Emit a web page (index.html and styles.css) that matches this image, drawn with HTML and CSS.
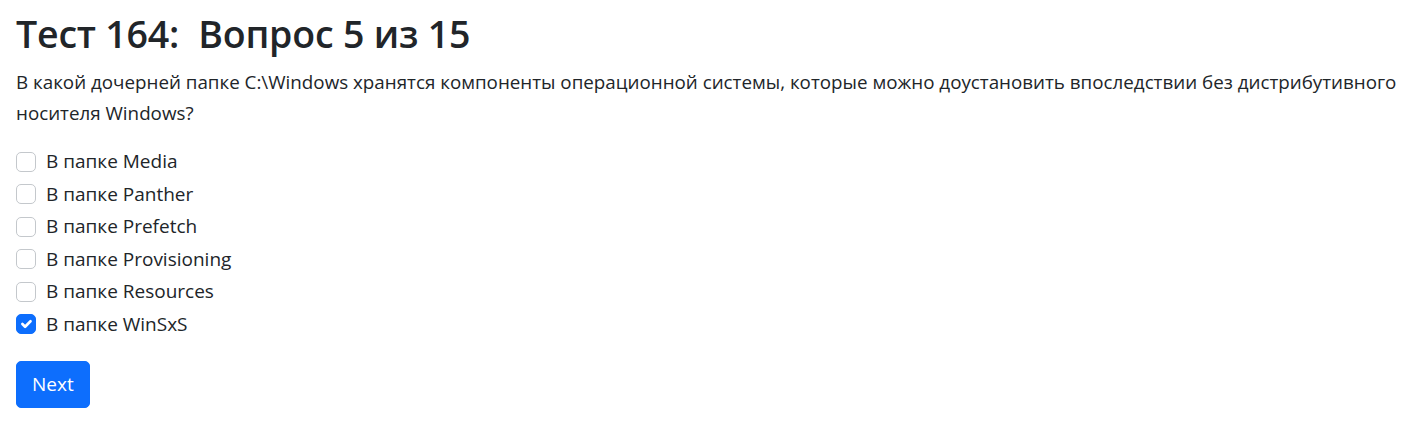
FILE: index.html
```html
<!DOCTYPE html>
<html lang="ru">
<head>
<meta charset="utf-8">
<title>Тест 164</title>
<link rel="stylesheet" href="styles.css">
</head>
<body>
<div class="container">
  <h1 class="title">Тест 164:&nbsp; Вопрос 5 из 15</h1>
  <p class="question">В какой дочерней папке C:\Windows хранятся компоненты операционной системы, которые можно доустановить впоследствии без дистрибутивного носителя Windows?</p>
  <form class="answers">
    <label class="check"><span class="box"></span><span class="label">В папке Media</span></label>
    <label class="check"><span class="box"></span><span class="label">В папке Panther</span></label>
    <label class="check"><span class="box"></span><span class="label">В папке Prefetch</span></label>
    <label class="check"><span class="box"></span><span class="label">В папке Provisioning</span></label>
    <label class="check"><span class="box"></span><span class="label">В папке Resources</span></label>
    <label class="check"><span class="box checked"><svg viewBox="0 0 20 20" width="20" height="20"><path d="M6 10l3 3 6-6" fill="none" stroke="#fff" stroke-width="3" stroke-linecap="round" stroke-linejoin="round"/></svg></span><span class="label">В папке WinSxS</span></label>
    <button type="button" class="btn">Next</button>
  </form>
</div>
</body>
</html>
```
FILE: styles.css
```css
html, body {
  margin: 0;
  padding: 0;
  background: #fff;
}
body {
  font-family: "Open Sans", "Noto Sans", sans-serif;
  font-size: 18.8px;
  line-height: 31px;
  color: #212529;
}
.container {
  padding: 9px 16px 0 16px;
}
.title {
  margin: 0 0 8px 0;
  font-size: 37.5px;
  font-weight: 600;
  line-height: 50px;
  letter-spacing: -0.2px;
}
.question {
  margin: 0 0 17px 0;
}
.answers {
  display: flex;
  flex-direction: column;
  align-items: flex-start;
}
.check {
  display: flex;
  align-items: center;
  gap: 10px;
  height: 31px;
  margin-bottom: 1.6px;
}
.box {
  box-sizing: border-box;
  width: 20px;
  height: 20px;
  border: 1px solid #c4c8cc;
  border-radius: 5px;
  display: flex;
  align-items: center;
  justify-content: center;
  background: #fff;
  overflow: hidden;
}
.box.checked {
  background: #0d6efd;
  border-color: #0d6efd;
}
.label {
  font-size: 19px;
}
.btn {
  margin-top: 19px;
  font-family: inherit;
  font-size: 19px;
  line-height: 30px;
  color: #fff;
  background: #0d6efd;
  border: 1px solid #0d6efd;
  border-radius: 5px;
  padding: 7px 15px;
  height: 47px;
}
```
